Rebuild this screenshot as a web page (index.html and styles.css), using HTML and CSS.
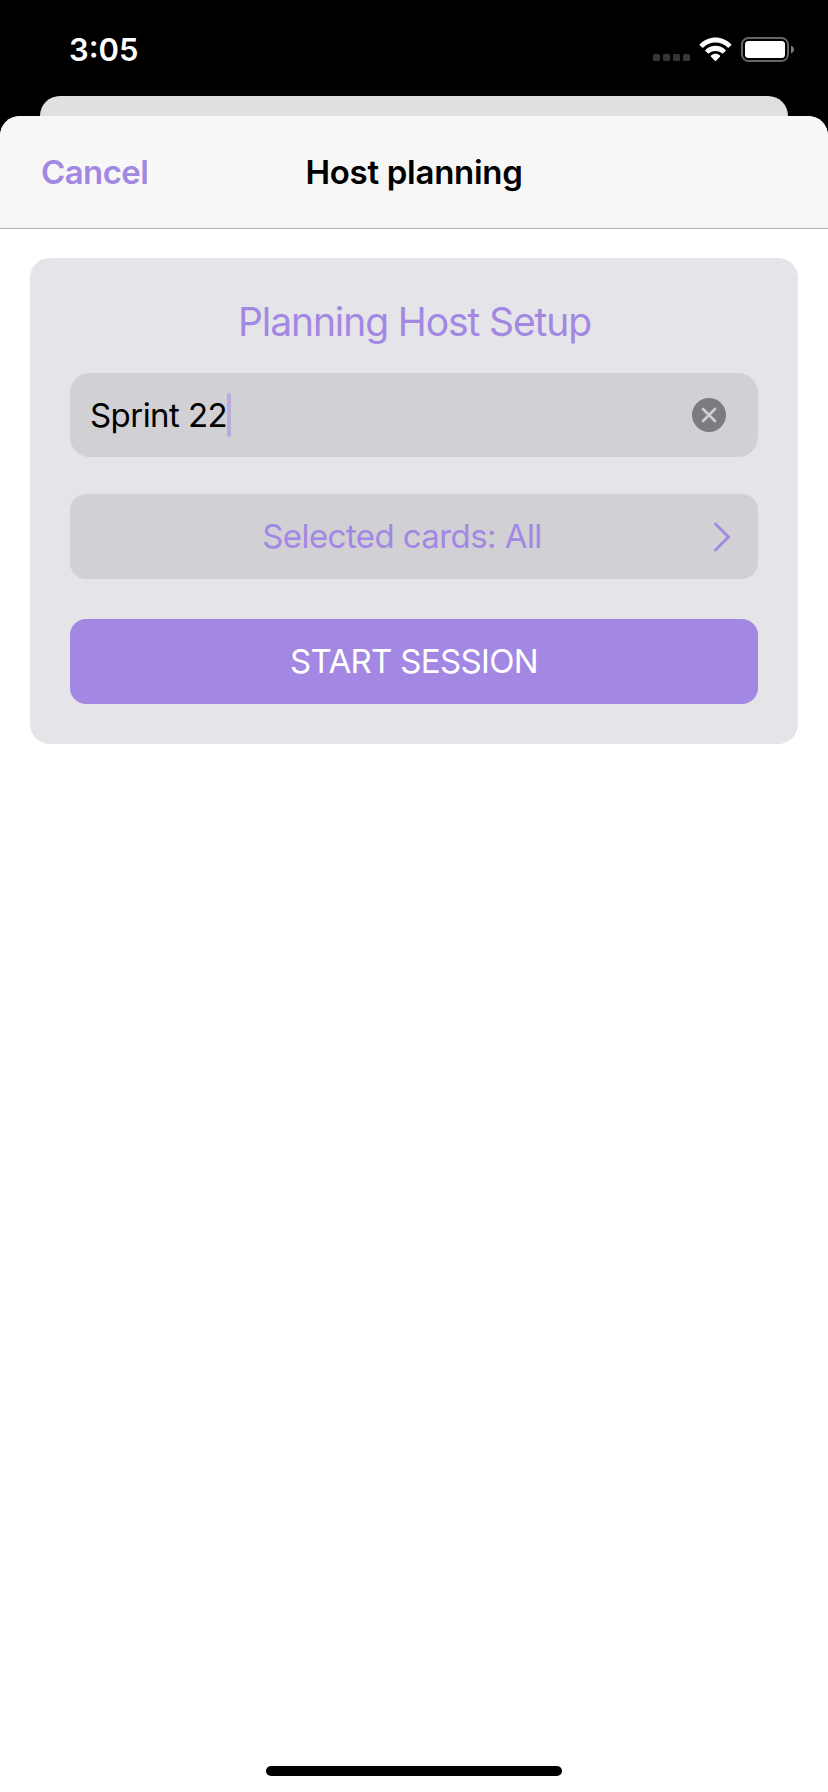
FILE: index.html
```html
<!DOCTYPE html>
<html lang="en">
<head>
<meta charset="utf-8">
<title>Host planning</title>
<link rel="stylesheet" href="styles.css">
</head>
<body>
<div class="screen">
  <header class="status">
    <span class="time">3:05</span>
    <svg class="indicators" width="142" height="26" viewBox="0 0 142 26">
      <g fill="#363636">
        <rect x="0" y="17" width="7" height="7" rx="1.500"/>
        <rect x="10" y="17" width="7" height="7" rx="1.500"/>
        <rect x="20" y="17" width="7" height="7" rx="1.500"/>
        <rect x="30" y="17" width="7" height="7" rx="1.500"/>
      </g>
      <g fill="#fff">
        <path d="M46.8 7.2C55.500 -1.800 69.500 -1.800 78.200 7.200Q78.700 7.800 78.200 8.300L75.800 10.500Q75.200 11 74.700 10.500C67.800 3.800 57.200 3.800 50.300 10.500Q49.800 11 49.200 10.500L46.800 8.300Q46.300 7.800 46.800 7.200Z"/>
        <path d="M52.400 12.900C58 7.500 67 7.500 72.600 12.900Q73.100 13.500 72.600 14L70.100 16.300Q69.500 16.800 69 16.300C65.300 13.100 59.700 13.100 56 16.300Q55.500 16.800 54.900 16.300L52.400 14Q51.900 13.500 52.400 12.900Z"/>
        <path d="M58 18.500C60.600 16.300 64.400 16.300 67 18.500Q67.600 19.100 67 19.700L63.100 23.700Q62.500 24.300 61.900 23.700L58 19.700Q57.400 19.100 58 18.500Z"/>
      </g>
      <rect x="89" y="1" width="46" height="23" rx="6.500" fill="none" stroke="#646464" stroke-width="2"/>
      <rect x="92" y="4" width="40" height="17" rx="3.500" fill="#fff"/>
      <path d="M138 8.500C142 10 142 15 138 16.500Z" fill="#7a7a7a"/>
    </svg>
  </header>
  <div class="back-sheet"></div>
  <main class="sheet">
    <nav class="navbar">
      <span class="cancel">Cancel</span>
      <h1 class="nav-title">Host planning</h1>
    </nav>
    <section class="card">
      <h2 class="card-title">Planning Host Setup</h2>
      <div class="field">
        <span class="field-text">Sprint 22</span><span class="caret"></span>
        <svg class="clear" width="34" height="34" viewBox="0 0 34 34">
          <circle cx="17" cy="17" r="17" fill="#7c7b80"/>
          <path d="M11 11L23 23M23 11L11 23" stroke="#d1d0d5" stroke-width="2.600" stroke-linecap="round"/>
        </svg>
      </div>
      <div class="row">
        <span class="row-text">Selected cards: All</span>
        <svg class="chevron" width="16" height="30" viewBox="0 0 16 30">
          <path d="M1.500 2L14.500 15L1.500 28" fill="none" stroke="#a388e3" stroke-width="2.800" stroke-linecap="round" stroke-linejoin="round"/>
        </svg>
      </div>
      <div class="start"><span class="start-text">START SESSION</span></div>
    </section>
    <div class="home-indicator"></div>
  </main>
</div>
</body>
</html>
```

FILE: styles.css
```css
* { box-sizing: border-box; }
body { margin: 0; background: #000; font-family: Inter, "Liberation Sans", sans-serif; }
h1, h2 { margin: 0; }
span, h1, h2 { white-space: nowrap; }
svg { display: block; flex: none; }
.screen { width: 828px; height: 1792px; display: flex; flex-direction: column; background: #000; overflow: hidden; }
.status { height: 96px; display: flex; justify-content: space-between; align-items: flex-start; padding: 37px 33px 0 69px; }
.time { font-size: 31px; line-height: 26px; font-weight: 600; color: #fff; }
.back-sheet { height: 20px; margin: 0 40px; background: #e0e0e0; border-radius: 20px 20px 0 0; }
.sheet { flex: 1; display: flex; flex-direction: column; background: #fff; border-radius: 20px 20px 0 0; overflow: hidden; }
.navbar { height: 113px; display: grid; grid-template-columns: 1fr auto 1fr; align-items: center; padding: 0 40px; background: #f7f7f7; border-bottom: 1px solid #b2b2b2; }
.cancel { padding-left: 1px; font-size: 33px; line-height: 40px; font-weight: 600; letter-spacing: -0.6px; color: #a388e3; }
.nav-title { font-size: 33px; line-height: 40px; font-weight: 600; letter-spacing: -0.28px; color: #000; }
.card { margin: 29px 30px 0; height: 486px; padding: 40px; border-radius: 20px; background: #e5e4e9; display: flex; flex-direction: column; }
.card-title { align-self: center; margin-bottom: 27px; padding-left: 1px; font-size: 39px; line-height: 48px; font-weight: 400; letter-spacing: -1.1px; color: #a388e3; }
.field { height: 84px; padding: 0 32px 0 20px; border-radius: 20px; background: #d1d0d5; display: flex; align-items: center; }
.field-text { font-size: 33px; line-height: 40px; letter-spacing: -0.55px; color: #000; }
.caret { width: 4px; height: 44px; border-radius: 2px; background: #b9abdc; }
.clear { margin-left: auto; }
.row { height: 85px; margin: 37px 0 40px; padding: 0 28px 0 20px; border-radius: 16px; background: #d1d0d5; display: flex; align-items: center; }
.row-text { flex: 1; padding-bottom: 2px; text-align: center; font-size: 33px; line-height: 40px; letter-spacing: -0.58px; color: #a388e3; }
.start { height: 85px; border-radius: 16px; background: #a388e3; display: flex; align-items: center; justify-content: center; }
.start-text { padding-bottom: 2px; font-size: 33px; line-height: 40px; letter-spacing: -0.67px; color: #fff; }
.home-indicator { width: 296px; height: 10px; margin: auto auto 16px; border-radius: 5px; background: #000; }
```
